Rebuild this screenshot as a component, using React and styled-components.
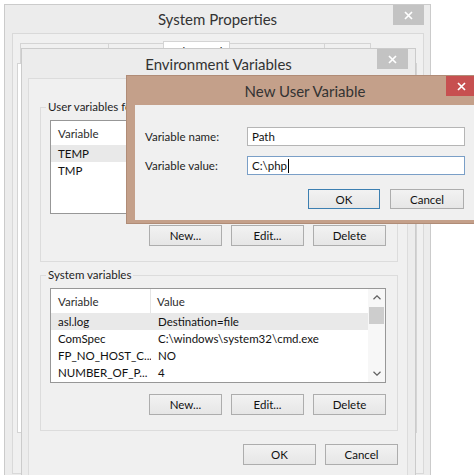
import React from 'react';
import styled, { createGlobalStyle } from 'styled-components';

const FONT = `Lato, "Noto Sans", Arial, sans-serif`;

const Global = createGlobalStyle`
  html, body { margin: 0; padding: 0; background: #fff; overflow: hidden; }
  body { font-family: ${FONT}; font-size: 11.5px; color: #1e1e1e; }
  * { box-sizing: border-box; }
`;

const Desktop = styled.div`
  position: relative;
  width: 474px;
  height: 475px;
  overflow: hidden;
  background: #fff;
`;

const Window = styled.div`
  position: absolute;
  left: ${p => p.$left}px;
  top: ${p => p.$top}px;
  width: ${p => p.$width}px;
  height: ${p => p.$height}px;
  z-index: ${p => p.$z};
  background: ${p => p.$frame};
  border: 1px solid ${p => p.$border};
  display: flex;
  flex-direction: column;
`;

const TitleBar = styled.div`
  flex-shrink: 0;
  height: ${p => p.$h}px;
  display: grid;
  grid-template-columns: 1fr auto 1fr;
  align-items: center;
`;

const Title = styled.div`
  grid-column: 2;
  font-size: 15px;
  color: #333;
  white-space: nowrap;
  line-height: 20px;
`;

const CloseButton = styled.div`
  grid-column: 3;
  justify-self: end;
  align-self: start;
  margin-right: ${p => p.$mr}px;
  width: 31px;
  height: 20px;
  background: ${p => (p.$active ? '#c75050' : '#c3c3c3')};
  display: flex;
  align-items: center;
  justify-content: center;
`;

const CloseIcon = () => (
  <svg width="9" height="9" viewBox="0 0 9 9">
    <path d="M1 1L8 8M8 1L1 8" stroke="#fff" strokeWidth="1.7" />
  </svg>
);

/* ---------- System Properties ---------- */
const SysClient = styled.div`
  flex: 1;
  margin: 0 6px 7px 7px;
  border: 1px solid #d9d9d9;
  background: #f0f0f0;
  padding: 9px 0 0 4px;
  display: flex;
  flex-direction: column;
`;

const TabRow = styled.div`
  display: flex;
  align-items: flex-end;
  height: 21px;
  padding-left: 3px;
`;

const Tab = styled.div`
  position: relative;
  z-index: ${p => (p.$active ? 1 : 0)};
  width: ${p => p.$w}px;
  height: ${p => (p.$active ? 23 : 21)}px;
  margin: 0 ${p => (p.$active ? -2 : -1)}px 0 ${p => (p.$active ? -2 : 0)}px;
  padding-top: ${p => (p.$active ? 2 : 5)}px;
  background: ${p => (p.$active ? '#fff' : '#f0f0f0')};
  border: 1px solid #d4d4d4;
  border-bottom: none;
  text-align: center;
  font-size: 12px;
  line-height: 16px;
  white-space: nowrap;
  overflow: hidden;
`;

const TabPage = styled.div`
  width: 400px;
  height: 370px;
  margin-top: -1px;
  background: #fff;
  border: 1px solid #d4d4d4;
`;

/* ---------- Environment Variables ---------- */
const EnvClient = styled.div`
  flex: 1;
  margin: 0 7px 0 6px;
  border: 1px solid #dcdcdc;
  border-bottom: none;
  background: #f0f0f0;
  padding: 20px 9px 0 11px;
  display: flex;
  flex-direction: column;
`;

const GroupBox = styled.fieldset`
  margin: ${p => p.$mt}px 0 0 0;
  min-width: 0;
  border: 1px solid #dcdcdc;
  padding: 5px 11px 15px 9px;
`;

const GroupLegend = styled.legend`
  padding: 0 2px;
  margin-left: -4px;
  line-height: 16px;
  color: #1e1e1e;
`;

const ListView = styled.div`
  height: ${p => p.$h}px;
  background: #fff;
  border: 1px solid #979797;
  display: flex;
  overflow: hidden;
`;

const ListMain = styled.div`
  flex: 1;
  min-width: 0;
  display: flex;
  flex-direction: column;
`;

const HeaderRow = styled.div`
  height: 24px;
  flex-shrink: 0;
  display: grid;
  grid-template-columns: 100px 1fr;
`;

const HeaderCell = styled.div`
  display: flex;
  align-items: center;
  padding-left: ${p => (p.$first ? 7 : 6)}px;
  border-right: ${p => (p.$first ? '1px solid #e5e5e5' : 'none')};
  color: #2d2d2d;
  white-space: nowrap;
`;

const Row = styled.div`
  height: 17px;
  flex-shrink: 0;
  display: grid;
  grid-template-columns: 100px 1fr;
  background: ${p => (p.$selected ? '#e9e9e9' : 'transparent')};
`;

const Cell = styled.div`
  display: flex;
  align-items: center;
  padding-left: 7px;
  white-space: nowrap;
  overflow: hidden;
  color: #111;
  line-height: 17px;
`;

const ScrollBar = styled.div`
  width: 17px;
  flex-shrink: 0;
  background: #f7f7f7;
  display: flex;
  flex-direction: column;
`;

const ScrollArrow = styled.div`
  height: 17px;
  display: flex;
  align-items: center;
  justify-content: center;
`;

const ScrollTrack = styled.div`
  flex: 1;
  padding: 1px 1px 0 1px;
`;

const ScrollThumb = styled.div`
  height: 17px;
  background: #cdcdcd;
`;

const Chevron = ({ down }) => (
  <svg width="8" height="5" viewBox="0 0 8 5">
    <path
      d={down ? 'M0.5 0.8L4 4.2L7.5 0.8' : 'M0.5 4.2L4 0.8L7.5 4.2'}
      fill="none"
      stroke="#606060"
      strokeWidth="1.2"
    />
  </svg>
);

const ButtonRow = styled.div`
  display: flex;
  justify-content: flex-end;
  gap: ${p => p.$gap}px;
  margin-top: ${p => p.$mt}px;
`;

const Button = styled.div`
  width: ${p => p.$w || 73}px;
  height: ${p => p.$h || 21}px;
  border: 1px solid ${p => (p.$default ? '#3c7fb1' : '#adadad')};
  background: linear-gradient(#f2f2f2, #e6e6e6);
  display: flex;
  align-items: center;
  justify-content: center;
  color: #111;
`;

/* ---------- New User Variable ---------- */
const DialogClient = styled.div`
  flex: 1;
  margin: 0 7px 3px 8px;
  background: #f0f0f0;
  padding: 22px 12px 0 10px;
`;

const FormGrid = styled.div`
  display: grid;
  grid-template-columns: 102px 218px;
  row-gap: 10px;
  align-items: center;
`;

const FieldLabel = styled.div`
  color: #1e1e1e;
  white-space: nowrap;
`;

const TextField = styled.div`
  height: 19px;
  border: 1px solid ${p => (p.$focused ? '#7a9fc7' : '#b5b5b5')};
  background: #fff;
  padding-left: 4px;
  display: flex;
  align-items: center;
  color: #111;
  white-space: nowrap;
`;

const Caret = styled.span`
  display: inline-block;
  width: 1px;
  height: 14px;
  margin-left: 1px;
  background: #000;
`;

const userVars = [
  { name: 'TEMP', value: '%USERPROFILE%\\AppData\\Local\\Temp', selected: true },
  { name: 'TMP', value: '%USERPROFILE%\\AppData\\Local\\Temp' },
];

const sysVars = [
  { name: 'asl.log', value: 'Destination=file', selected: true },
  { name: 'ComSpec', value: 'C:\\windows\\system32\\cmd.exe' },
  { name: 'FP_NO_HOST_C...', value: 'NO' },
  { name: 'NUMBER_OF_P...', value: '4' },
];

const tabs = [
  { label: 'Computer Name', w: 89 },
  { label: 'Hardware', w: 58 },
  { label: 'Advanced', w: 67, active: true },
  { label: 'System Protection', w: 97 },
  { label: 'Remote', w: 47 },
];

function VarList({ h, rows, scroll }) {
  return (
    <ListView $h={h}>
      <ListMain>
        <HeaderRow>
          <HeaderCell $first>Variable</HeaderCell>
          <HeaderCell>Value</HeaderCell>
        </HeaderRow>
        {rows.map(r => (
          <Row key={r.name} $selected={r.selected}>
            <Cell>{r.name}</Cell>
            <Cell>{r.value}</Cell>
          </Row>
        ))}
      </ListMain>
      {scroll && (
        <ScrollBar>
          <ScrollArrow><Chevron /></ScrollArrow>
          <ScrollTrack><ScrollThumb /></ScrollTrack>
          <ScrollArrow><Chevron down /></ScrollArrow>
        </ScrollBar>
      )}
    </ListView>
  );
}

export default function App() {
  return (
    <>
      <Global />
      <Desktop>
        <Window $left={4} $top={4} $width={427} $height={478} $z={1} $frame="#ececec" $border="#cbcbcb">
          <TitleBar $h={28}>
            <Title>System Properties</Title>
            <CloseButton $mr={6}><CloseIcon /></CloseButton>
          </TitleBar>
          <SysClient>
            <TabRow>
              {tabs.map(t => (
                <Tab key={t.label} $w={t.w} $active={t.active}>{t.label}</Tab>
              ))}
            </TabRow>
            <TabPage />
          </SysClient>
        </Window>

        <Window $left={21} $top={48} $width={395} $height={440} $z={2} $frame="#ececec" $border="#cbcbcb">
          <TitleBar $h={29}>
            <Title>Environment Variables</Title>
            <CloseButton $mr={7}><CloseIcon /></CloseButton>
          </TitleBar>
          <EnvClient>
            <GroupBox $mt={0}>
              <GroupLegend>User variables for Administrator</GroupLegend>
              <VarList h={94} rows={userVars} />
              <ButtonRow $gap={9} $mt={11}>
                <Button>New...</Button>
                <Button>Edit...</Button>
                <Button>Delete</Button>
              </ButtonRow>
            </GroupBox>
            <GroupBox $mt={5}>
              <GroupLegend>System variables</GroupLegend>
              <VarList h={95} rows={sysVars} scroll />
              <ButtonRow $gap={9} $mt={11}>
                <Button>New...</Button>
                <Button>Edit...</Button>
                <Button>Delete</Button>
              </ButtonRow>
            </GroupBox>
            <ButtonRow $gap={9} $mt={13}>
              <Button>OK</Button>
              <Button>Cancel</Button>
            </ButtonRow>
          </EnvClient>
        </Window>

        <Window $left={126} $top={75} $width={358} $height={149} $z={3} $frame="#c4a08a" $border="#b08c77">
          <TitleBar $h={29}>
            <Title>New User Variable</Title>
            <CloseButton $mr={6} $active><CloseIcon /></CloseButton>
          </TitleBar>
          <DialogClient>
            <FormGrid>
              <FieldLabel>Variable name:</FieldLabel>
              <TextField>Path</TextField>
              <FieldLabel>Variable value:</FieldLabel>
              <TextField $focused>C:\php<Caret /></TextField>
            </FormGrid>
            <ButtonRow $gap={10} $mt={14}>
              <Button $default $w={72} $h={20}>OK</Button>
              <Button $w={74} $h={20}>Cancel</Button>
            </ButtonRow>
          </DialogClient>
        </Window>
      </Desktop>
    </>
  );
}
